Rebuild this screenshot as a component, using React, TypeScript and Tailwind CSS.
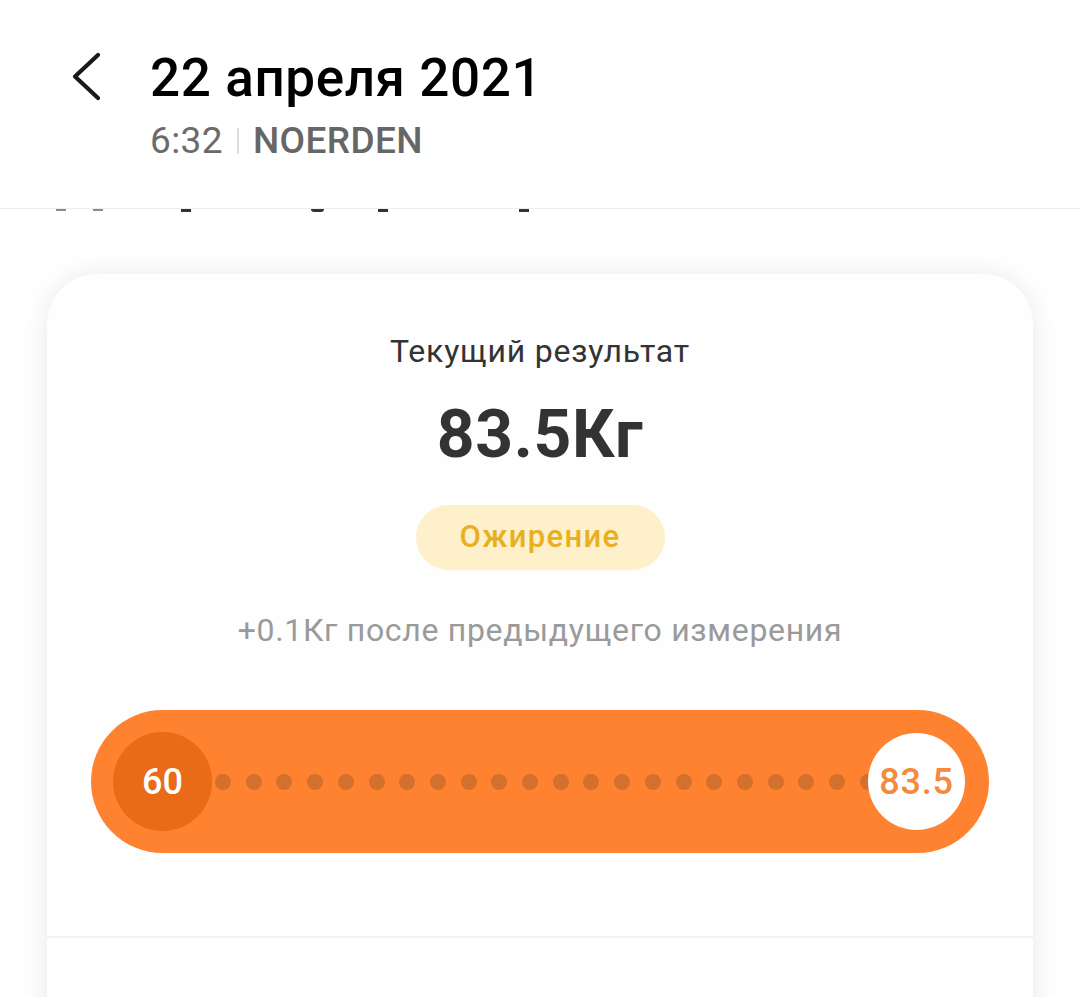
import React from "react";

export default function App() {
  const dots = Array.from({ length: 22 });
  return (
    <div className="w-[1080px] h-[997px] overflow-hidden bg-white font-['Roboto',sans-serif]">
      {/* Header */}
      <div className="h-[209px] border-b border-[#ececec] pt-[48px] pl-[71px] flex">
        <div className="w-[79px] pt-[3px]">
          <svg width="32" height="50" viewBox="0 0 32 50" fill="none">
            <path d="M27 4 L4 25.5 L27 47" stroke="#1a1a1a" strokeWidth="4.2" strokeLinecap="round" strokeLinejoin="round" />
          </svg>
        </div>
        <div className="flex flex-col">
          <div className="text-[53px] leading-[60px] font-medium text-black tracking-[0.6px]">22 апреля 2021</div>
          <div className="mt-[13px] flex items-center text-[37px] leading-[40px] text-[#6b6b6b] tracking-[0.4px]">
            <span>6:32</span>
            <span className="mx-[14px] w-[2px] h-[26px] bg-[#dcdcdc]" />
            <span className="font-medium text-[#666666]">NOERDEN</span>
          </div>
        </div>
      </div>
      {/* clipped text fragments */}
      <div className="h-[4px] flex items-start">
        <div className="ml-[56px] w-[10px] h-[2px] bg-[#8a8a8a]" />
        <div className="ml-[27px] w-[10px] h-[2px] bg-[#8a8a8a]" />
        <div className="ml-[78px] w-[10px] h-[3px] bg-[#333333]" />
        <div className="ml-[120px] w-[13px] h-[3px] bg-[#333333] rounded-b-[4px]" />
        <div className="ml-[54px] w-[10px] h-[3px] bg-[#333333]" />
        <div className="ml-[131px] w-[10px] h-[3px] bg-[#333333]" />
      </div>

      {/* Card */}
      <div className="mt-[61px] mx-[47px] h-[800px] rounded-[50px] bg-[#fefefe] shadow-[0_0_28px_rgba(0,0,0,0.09)] pt-[59px] flex flex-col items-center">
        <div className="text-[32px] leading-[36px] text-[#333333] tracking-[0.8px]">Текущий результат</div>
        <div className="mt-[34px] text-[66px] leading-[64px] font-bold text-[#333333] tracking-[0.6px]">83.5Кг</div>
        <div className="mt-[38px] w-[249px] h-[65px] rounded-full bg-[#fdf0cb] flex items-center justify-center text-[31px] font-medium text-[#e8b021] tracking-[1.3px]">
          Ожирение
        </div>
        <div className="mt-[42px] text-[32px] leading-[36px] text-[#9a9a9a] tracking-[0.7px]">+0.1Кг после предыдущего измерения</div>

        <div className="mt-[62px] self-stretch mx-[44px] h-[143px] rounded-full bg-[#fe822f] flex items-center pl-[22px] pr-[24px]">
          <div className="w-[99px] h-[99px] shrink-0 rounded-full bg-[#e96a17] flex items-center justify-center text-[36px] font-medium text-white">
            60
          </div>
          <div className="flex-1 flex justify-between items-center ml-[3px] -mr-[8px]">
            {dots.map((_, i) => (
              <div key={i} className="w-[16px] h-[16px] rounded-full bg-[#d3702d]" />
            ))}
          </div>
          <div className="relative w-[97px] h-[97px] shrink-0 rounded-full bg-white flex items-center justify-center text-[36px] font-medium text-[#f5893e] tracking-[0.8px]">
            83.5
          </div>
        </div>

        <div className="mt-[83px] self-stretch h-[2px] bg-[#f1f1f1]" />
      </div>
    </div>
  );
}
